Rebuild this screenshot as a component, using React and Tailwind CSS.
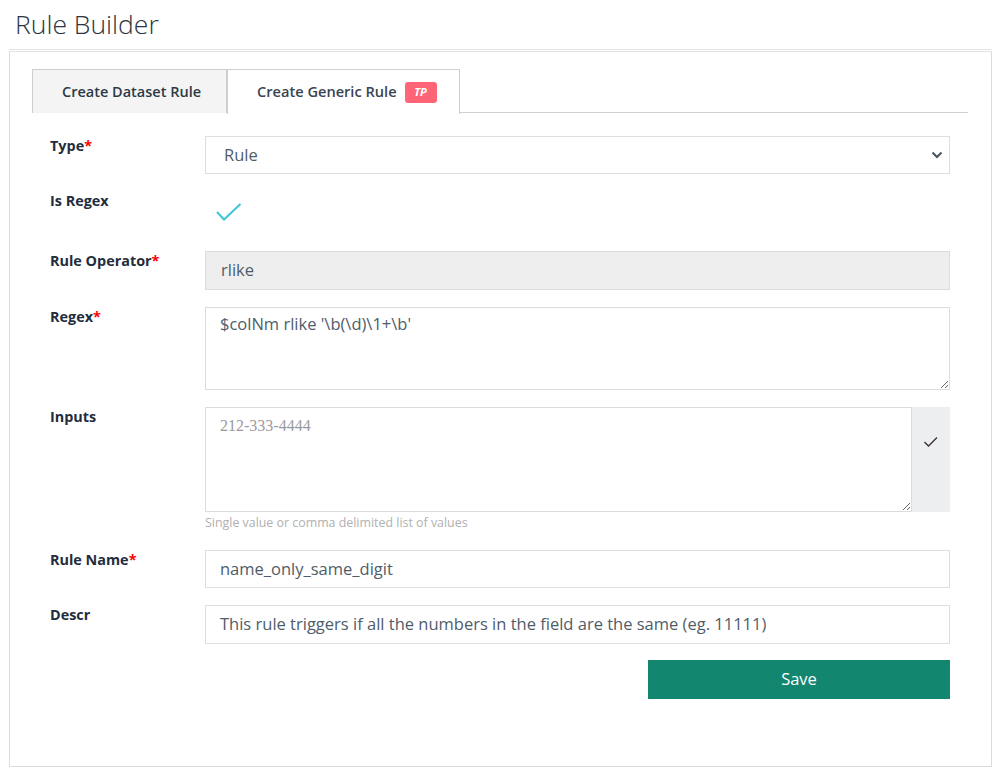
import React from "react";

const font = { fontFamily: '"Open Sans", "Noto Sans", sans-serif' };

function Label({ children, req }) {
  return (
    <div className="text-[14.4px] leading-[20px] font-bold text-[#1f2d3d]">
      {children}
      {req && <span className="text-[#ff0000]">*</span>}
    </div>
  );
}

function Row({ label, req, children, mb = "mb-[17px]" }) {
  return (
    <div className={`grid grid-cols-[155px_1fr] ${mb}`}>
      <Label req={req}>{label}</Label>
      <div>{children}</div>
    </div>
  );
}

export default function App() {
  return (
    <div style={font} className="w-[1000px] h-[773px] bg-white relative overflow-hidden">
      <h1 className="pl-[15px] pt-[6px] text-[26.5px] leading-[36px] font-light text-[#2b3440] h-[49px]">
        Rule Builder
      </h1>
      <div className="ml-[9px] w-[983px] border-t border-[#e3e3e3] pt-px">
        <div className="border border-t-[#e3e3e3] border-[#dcdcdc] h-[716px] pt-[17px] pl-[22px] pr-[23px]">
          {/* Tabs */}
          <div className="flex border-b border-[#cfcfcf] h-[44px]">
            <div className="h-[44px] bg-[#f4f4f4] border border-b-0 border-[#cfcfcf] pl-[29px] pr-[20px] flex items-center text-[14.5px] font-semibold text-[#2c3a47] w-[195px] whitespace-nowrap">
              Create Dataset Rule
            </div>
            <div className="h-[45px] bg-white border border-b-0 border-[#cfcfcf] pl-[29px] pr-[18px] flex items-center text-[14.6px] font-semibold text-[#3a4450] w-[233px] whitespace-nowrap">
              Create Generic Rule
              <span className="ml-[8px] inline-flex items-center justify-center w-[32px] h-[21px] rounded-[3px] bg-[#ff6577] text-white text-[11px] font-bold italic">
                TP
              </span>
            </div>
          </div>

          {/* Form */}
          <div className="ml-[18px] w-[900px] mt-[23px]">
            <Row label="Type" req>
              <div className="relative h-[38px] border border-[#dedede] bg-white flex items-center pl-[18px] text-[16.5px] text-[#4f5d6a]">
                Rule
                <svg className="absolute right-[6px] top-[14px]" width="12" height="8" viewBox="0 0 12 8">
                  <path d="M1.5 1.5 L6 6 L10.5 1.5" fill="none" stroke="#46535f" strokeWidth="2" />
                </svg>
              </div>
            </Row>
            <Row label="Is Regex">
              <div className="h-[43px] pl-[11px] pt-[12px]">
                <svg width="26" height="20" viewBox="0 0 26 20">
                  <path d="M1 9 L8 16.5 L24.5 1" fill="none" stroke="#3fc6d6" strokeWidth="2" />
                </svg>
              </div>
            </Row>
            <Row label="Rule Operator" req>
              <div className="h-[39px] border border-[#dcdcdc] bg-[#eeeeee] flex items-center pl-[15px] text-[16.5px] text-[#4f5d6a]">
                rlike
              </div>
            </Row>
            <Row label="Regex" req>
              <textarea
                readOnly
                value={"$colNm rlike '\\b(\\d)\\1+\\b'"}
                className="block w-full h-[83px] border border-[#dcdcdc] bg-white pl-[14px] pt-[4px] text-[16.5px] leading-[24px] text-[#4f5d6a] outline-none"
                style={font}
              />
            </Row>
            <Row label="Inputs" mb="mb-[19px]">
              <div className="flex h-[105px]">
                <textarea
                  readOnly
                  placeholder="212-333-4444"
                  className="block flex-1 h-full border border-[#dcdcdc] bg-white pl-[14px] pt-[7px] text-[16px] leading-[22px] outline-none placeholder:text-[#9a9a9a]"
                  style={{ fontFamily: '"Liberation Serif", "Times New Roman", serif' }}
                />
                <div className="w-[38px] h-full bg-[#eceef0] flex justify-center pt-[29px]">
                  <svg width="16" height="12" viewBox="0 0 16 12">
                    <path d="M1.5 6 L5.5 10 L14 1.5" fill="none" stroke="#3a2f33" strokeWidth="1.3" />
                  </svg>
                </div>
              </div>
              <div className="mt-[3px] text-[12.4px] leading-[16px] text-[#b0b0b0]">
                Single value or comma delimited list of values
              </div>
            </Row>
            <Row label="Rule Name" req>
              <div className="h-[38px] border border-[#dedede] bg-white flex items-center pl-[14px] text-[16.5px] text-[#4f5d6a]">
                name_only_same_digit
              </div>
            </Row>
            <Row label="Descr" mb="mb-[16px]">
              <div className="h-[39px] border border-[#dedede] bg-white flex items-center pl-[14px] text-[16.5px] text-[#4f5d6a] whitespace-nowrap">
                This rule triggers if all the numbers in the field are the same (eg. 11111)
              </div>
            </Row>
            <div className="flex justify-end">
              <button className="w-[302px] h-[39px] bg-[#12866f] text-white text-[16.5px]" style={font}>
                Save
              </button>
            </div>
          </div>
        </div>
      </div>
    </div>
  );
}
